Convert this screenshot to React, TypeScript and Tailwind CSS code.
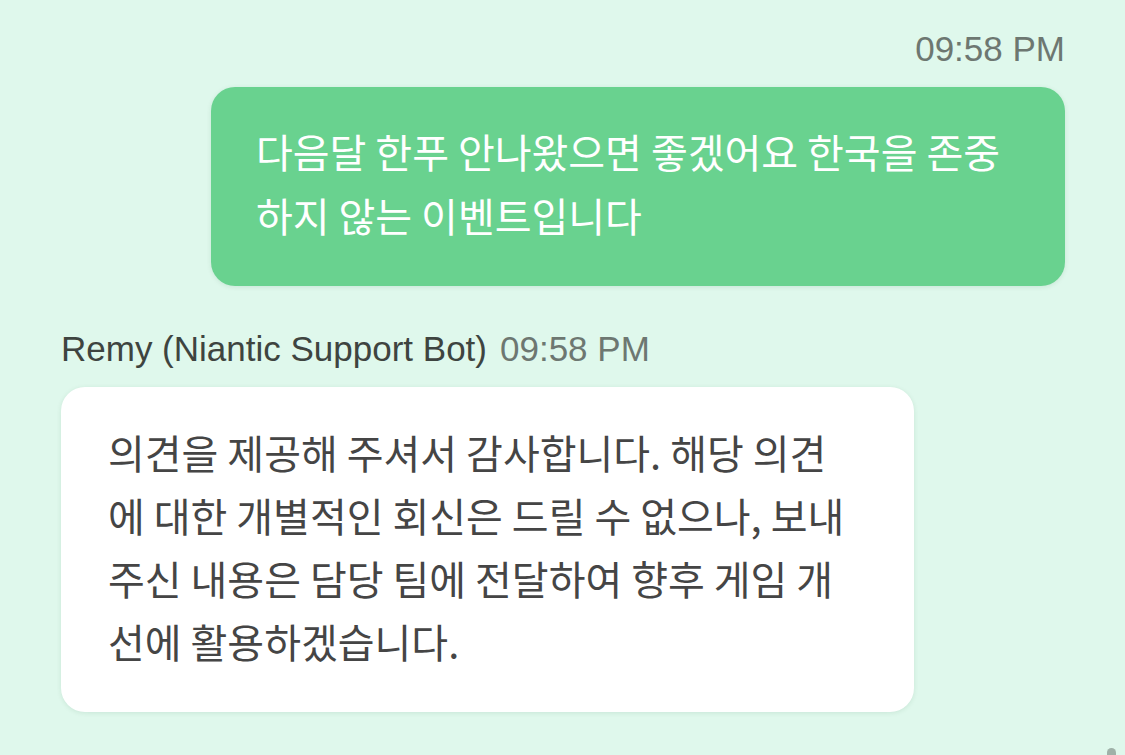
import React from "react";

export default function App() {
  return (
    <div className="relative h-[755px] w-[1125px] overflow-hidden bg-[#dff8ec] pl-[61px] pr-[60px] pt-[29px]">
      <div className="flex flex-col items-end">
        <div className="font-['Liberation_Sans',Arial,sans-serif] text-[35px] leading-[40px] text-[#6d7771]">
          09:58 PM
        </div>
        <div className="mt-[18px] w-[854px] rounded-[24px] bg-[#69d28f] pl-[45px] pr-[20px] pt-[32px] pb-[39px] font-['Noto_Sans_CJK_KR',sans-serif] text-[40px] leading-[64px] whitespace-nowrap text-white shadow-[0_1px_5px_rgba(0,80,40,0.10)]">
          다음달 한푸 안나왔으면 좋겠어요 한국을 존중
          <br />
          하지 않는 이벤트입니다
        </div>
      </div>

      <div className="mt-[43px] flex items-baseline gap-[13px] font-['Liberation_Sans',Arial,sans-serif] text-[35px] leading-[40px]">
        <span className="text-[#3e4440]">Remy (Niantic Support Bot)</span>
        <span className="text-[#6d7771]">09:58 PM</span>
      </div>

      <div className="mt-[18px] w-[853px] rounded-[24px] bg-white pl-[47px] pr-[20px] pt-[34px] pb-[39px] font-['Noto_Sans_CJK_KR',sans-serif] text-[40px] leading-[63px] whitespace-nowrap text-[#454545] shadow-[0_1px_5px_rgba(0,80,40,0.10)]">
        의견을 제공해 주셔서 감사합니다. 해당 의견
        <br />
        에 대한 개별적인 회신은 드릴 수 없으나, 보내
        <br />
        주신 내용은 담당 팀에 전달하여 향후 게임 개
        <br />
        선에 활용하겠습니다.
      </div>

      <div className="absolute left-[1107px] top-[748px] h-[14px] w-[9px] rounded-full bg-[#9fb1a8]" />
    </div>
  );
}
